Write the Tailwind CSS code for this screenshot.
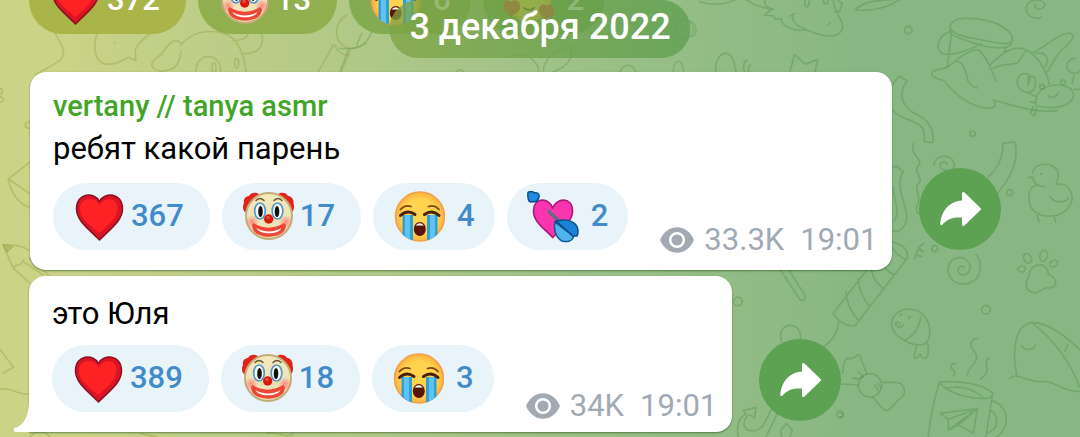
<!DOCTYPE html>
<html lang="ru">
<head>
  <meta charset="UTF-8" />
  <meta name="viewport" content="width=device-width, initial-scale=1.0" />
  <title>vertany // tanya asmr</title>
  <script src="https://cdn.jsdelivr.net/npm/@tailwindcss/browser@4"></script>
</head>
<body class="font-[Roboto,'Noto_Sans',sans-serif]">

  <!-- Shared emoji and icons -->
  <svg class="absolute size-0" aria-hidden="true">
    <defs>
      <linearGradient id="skin" x1="0" y1="0" x2="0" y2="1"><stop offset="0" stop-color="#f3e9bd" /><stop offset="1" stop-color="#ecdfb4" /></linearGradient>
      <radialGradient id="blush"><stop offset="0" stop-color="#f98a7e" /><stop offset="1" stop-color="#f98a7e" stop-opacity="0" /></radialGradient>
      <radialGradient id="yellow"><stop offset="0.7" stop-color="#ffd34e" /><stop offset="1" stop-color="#fbb040" /></radialGradient>
      <clipPath id="cryClip"><circle cx="27" cy="25.5" r="25" /></clipPath>
    </defs>
    <symbol id="heart" viewBox="0 0 52 52">
      <path d="M26.500 10.500C22 1 3.500 1 3.500 18C3.500 30 17 39 26.500 49C36 39 49.500 30 49.500 18C49.500 1 31 1 26.500 10.500Z" fill="#d81524" stroke="#8f0f20" stroke-width="1.500" stroke-linejoin="round" />
      <path d="M26.500 14C22 5.500 7 5.500 7 18C7 28 18 34.500 26 42C35 34.500 44.500 27 44.500 17C44.500 6 31 5.500 26.500 14Z" fill="#ff2224" />
    </symbol>
    <symbol id="clown" viewBox="0 0 52 52">
      <path d="M3 21C0 18 1 14 2 12C1 8 4 5 7 5C9 1 14 1 17 3L9 22ZM50 21C53 18 52 14 51.500 12C52 8 49 5 46 5C44 1 39 1 36 3L44 22Z" fill="#e2231a" />
      <circle cx="27" cy="25" r="23" fill="url(#skin)" stroke="#c2ad76" stroke-width="2" />
      <circle cx="10" cy="31" r="7" fill="url(#blush)" /><circle cx="44" cy="31" r="7" fill="url(#blush)" />
      <path d="M14 9.500Q18 5.500 22 9.500M32 9.500Q36 5.500 40 9.500" fill="none" stroke="#6b5a33" stroke-width="1.500" stroke-linecap="round" />
      <ellipse cx="18" cy="20" rx="5.300" ry="8" fill="#fff" stroke="#4f97c9" stroke-width="1.700" />
      <ellipse cx="35.500" cy="20" rx="5.300" ry="8" fill="#fff" stroke="#4f97c9" stroke-width="1.700" />
      <ellipse cx="18.500" cy="20.500" rx="2.300" ry="5.500" fill="#111" /><ellipse cx="35" cy="20.500" rx="2.300" ry="5.500" fill="#111" />
      <circle cx="26.700" cy="28" r="4.700" fill="#d8190e" /><circle cx="26" cy="26.500" r="1.800" fill="#f04a36" />
      <path d="M12.500 32.500C20 38 33 38 41 32.500C43.500 31.500 44.500 34 43.500 37C41 48.500 13 48.500 10.500 37C9.500 34 10.500 31.500 12.500 32.500Z" fill="#ee4537" />
      <path d="M14.500 37C21 41.500 33 41.500 39.500 37C37 44 17 44 14.500 37Z" fill="#fff" />
    </symbol>
    <symbol id="cry" viewBox="0 0 52 52">
      <circle cx="27" cy="25.500" r="24.500" fill="url(#yellow)" stroke="#f3a04a" stroke-width="1.500" />
      <g clip-path="url(#cryClip)">
        <path d="M9.500 24H20V52H9.500ZM34 24H44.500V52H34Z" fill="#2f9fd8" />
        <path d="M12 24H17V52H12ZM37 24H42V52H37Z" fill="#5cc3f2" />
      </g>
      <path d="M7.500 18.500Q12 13.500 18 15.500M46 18.500Q41.500 13.500 35.500 15.500" fill="none" stroke="#7a4a12" stroke-width="1.800" stroke-linecap="round" />
      <path d="M7.500 24.500Q14.500 18 22 23.500M46 24.500Q39 18 31.500 23.500" fill="none" stroke="#4a2206" stroke-width="3" stroke-linecap="round" />
      <ellipse cx="26.800" cy="38" rx="6" ry="7" fill="#5a1508" />
      <path d="M22.500 34.500Q26.800 30 31 34.500Z" fill="#fff" />
    </symbol>
    <symbol id="cupid" viewBox="0 0 52 52">
      <path d="M25.700 17C22 6 6.500 6 6.500 20C6.500 31 18 38 25.700 46.500C34 38 45.500 31 45.500 20C45.500 6 30 6 25.700 17Z" fill="#fb34b0" stroke="#b01878" stroke-width="1.700" stroke-linejoin="round" />
      <path d="M1 1.500C4 -0.500 6 0.500 7.500 2C10 1.500 12.500 2.500 12 6C11.500 8.500 10 9.500 9.500 10.500C6 11 3 11.500 2 10C1 8 0.700 4 1 1.500Z" fill="#1f8be0" stroke="#0b4f86" stroke-width="1.500" />
      <path d="M22 20.500L36 34" stroke="#5d6f80" stroke-width="3.500" stroke-linecap="round" />
      <path d="M28 31C26 38 29 47 35 50C40 51.500 45 50 46 47L47 44L30 29Z" fill="#52b4ee" stroke="#0b5d94" stroke-width="1.500" stroke-linejoin="round" />
      <path d="M28 31C34 27.500 45 28.500 49 34C51.500 37 51.500 42 50 45L46 45Z" fill="#1c84d8" stroke="#0b4f86" stroke-width="1.500" stroke-linejoin="round" />
      <path d="M29 30L46 45" stroke="#0b4f86" stroke-width="1.500" />
    </symbol>
    <symbol id="love" viewBox="0 0 52 52">
      <circle cx="26" cy="25" r="22" fill="url(#yellow)" />
      <path d="M14 21Q18 16 22 21M31 21Q35 16 39 21M21 33Q26 37 31 33" fill="none" stroke="#7a4a12" stroke-width="2" stroke-linecap="round" />
      <path d="M8 27C4 23 -1 27 1 33C2 37 6 39 8 41C13 39 18 36 17 30C16 25 10 24 8 27ZM44 31C40 27 35 31 36 36C37 40 41 43 43 45C48 43 52 40 51 35C51 30 46 28 44 31Z" fill="#f0402c" />
    </symbol>
    <symbol id="eye" viewBox="0 0 34 26">
      <path d="M0 13C7 -4 27 -4 34 13C27 30 7 30 0 13Z" fill="#a1aab3" />
      <circle cx="17" cy="13" r="6.800" fill="#a1aab3" stroke="#fff" stroke-width="2.500" />
    </symbol>
    <symbol id="share" viewBox="0 0 82 82">
      <path d="M43 25.500C43 24 44.500 23.500 45.500 24.500L61.500 40C62.200 40.700 62.200 41.300 61.500 42L45.500 57.500C44.500 58.500 43 58 43 56.500V49.500C35 49 29 50 23.500 56.500C22.500 57.500 21 57 21.300 55.500C22.500 44 29 33.500 43 32.500Z" fill="#fff" />
    </symbol>
  </svg>

  <main class="relative min-h-screen overflow-hidden bg-linear-to-r from-[#cbd387] from-5% via-[#9bc087] via-55% to-[#88b783] to-80%">

    <!-- Wallpaper doodles -->
    <svg class="absolute inset-0 w-full h-full" viewBox="0 0 1080 437" preserveAspectRatio="xMidYMid slice" fill="none" stroke-linecap="round" stroke-linejoin="round" aria-hidden="true">
      <g transform="scale(.33333)" stroke="#8d9c36" stroke-opacity=".35" stroke-width="5">
        <path d="M165 100C190 140 200 165 180 180C160 198 130 208 108 224M292 100C280 130 280 170 305 188C325 200 355 190 385 172L408 182L405 150C415 130 430 115 450 102M545 130C520 110 505 135 490 155C475 175 455 180 455 195C465 220 500 215 520 205C540 190 540 170 543 155M543 135C570 100 610 92 650 95C700 100 730 140 738 214M588 214C588 185 605 170 625 170C650 170 662 190 662 214M700 122C730 120 745 110 745 100M785 102C795 140 770 165 725 160M1040 45C1000 70 1000 120 1035 140C1050 150 1075 145 1100 130M1000 135L955 214M1050 150L1025 214M1005 135C1010 155 1035 168 1048 165" />
        <path d="M0 265C12 270 8 280 0 284M0 290C18 295 8 308 0 306M88 365C72 368 72 385 88 385M88 487L25 537L88 580M25 540C35 585 60 612 88 622M8 733L40 805L88 848M8 733C35 735 65 735 88 752M40 805C48 785 60 808 70 780M70 785L130 825M88 775L145 825M0 1048L40 1102L8 1120M0 1168C30 1160 55 1185 85 1182M90 1311C105 1292 135 1292 150 1311M420 1300L470 1311M800 1300C830 1290 860 1320 880 1300" />
        <path d="M10 735L38 740L22 756Z" fill="#8d9c36" fill-opacity=".35" />
        <ellipse cx="642" cy="205" rx="6" ry="16" /><ellipse cx="710" cy="190" rx="6" ry="14" /><circle cx="345" cy="128" r="1" />
      </g>
      <g transform="translate(340 0) scale(.33333)" stroke="#4c8e44" stroke-opacity=".3" stroke-width="5">
        <path d="M0 145C40 150 80 140 95 95M0 215L25 150M50 135L65 100M350 215C355 208 365 208 370 215M510 170C560 150 600 190 595 215M690 140C705 175 680 200 640 215M610 215C610 180 640 150 690 140M840 215C850 190 880 190 887 215M1000 215C1000 190 1010 180 1020 185C1030 190 1030 210 1030 215M1055 110C1075 105 1070 70 1050 62" />
        <circle cx="1032" cy="88" r="28" />
      </g>
      <g transform="translate(700 0) scale(.33333)" stroke="#4c8e44" stroke-opacity=".36" stroke-width="5">
        <path d="M0 5C30 15 70 15 105 0M140 0L165 15L215 28L193 45L222 48L225 58L243 55C245 75 270 95 320 90M195 0C190 15 205 25 220 28M270 48L285 40C268 50 285 75 300 80C340 100 380 115 410 105C430 95 432 75 420 55C410 35 400 20 400 0M385 75L390 68M413 0L427 10L418 35L405 35M315 0C310 30 330 25 328 0M370 0C370 12 385 20 385 0M465 30C500 -5 550 5 600 -5M465 30C520 35 570 20 605 -5" />
        <path d="M47 215C45 180 60 160 78 160C100 162 102 190 108 215M140 180C128 190 130 205 133 215M150 195C143 202 145 210 147 215M270 215L283 165C290 160 300 185 315 192C330 190 350 175 353 182L345 215" />
        <circle cx="625" cy="90" r="11" /><circle cx="818" cy="401" r="8" />
        <path d="M1035 15C1030 -5 985 -5 980 20C975 45 1000 60 1025 52M1005 12C1000 28 1025 35 1035 15" />
        <path d="M752 75C760 50 810 52 860 62C920 75 945 110 935 125C920 140 860 120 820 115C780 110 740 90 752 75ZM750 80V100C770 115 810 125 850 138C890 145 940 150 935 120M755 95L742 200M750 95C715 105 700 150 730 162C770 168 810 145 847 132" />
        <path d="M835 150C810 145 770 180 740 203C710 210 695 210 695 222C700 240 725 235 735 245C770 290 820 325 870 325C885 325 890 310 880 300C940 315 1000 340 1070 332M835 150C860 170 875 210 887 242M770 183C800 195 790 210 800 225C800 245 815 260 832 264M870 195C900 165 940 130 980 150C1010 165 1040 210 1048 252M880 205C900 190 940 195 950 190C965 180 965 160 980 152M918 145L912 155M998 158C1040 140 1080 95 1110 100C1130 105 1110 130 1090 145C1065 165 1055 200 1042 215M1010 160C1040 155 1050 180 1035 200" />
        <path d="M1008 312C1005 280 1030 255 1070 255C1110 255 1125 275 1120 290C1110 320 1060 330 1010 318ZM1046 288C1055 295 1070 292 1075 278M985 222C960 215 945 235 955 260C970 280 995 282 1003 265C1010 245 1005 225 992 228L985 255ZM1125 175C1105 175 1095 195 1105 212C1120 225 1140 220 1140 210M985 280L1010 290M990 305L1005 308M1000 320L992 340L1003 348L1010 325M1117 250L1122 225M1122 268H1140" />
        <circle cx="1026" cy="260" r="7" /><circle cx="1089" cy="247" r="7" />
        <path d="M578 255L597 228L622 243C595 275 600 310 640 338C680 355 705 385 698 428L672 425C678 390 665 375 640 365C610 355 590 345 578 330" />
        <path d="M908 430L945 426C955 470 940 515 915 550C890 590 860 610 830 625M908 430C912 470 890 510 865 530" />
      </g>
      <g transform="translate(840 150) scale(.33333)" stroke="#4c8e44" stroke-opacity=".36" stroke-width="5">
        <path d="M220 -20C210 10 238 20 240 40C215 65 245 75 240 95C215 120 245 135 235 155C225 180 230 190 240 192M282 45C285 10 340 10 343 45C340 70 300 65 300 45C305 30 320 35 322 45M157 55L168 47L190 65C160 110 205 170 200 205C195 240 170 250 160 242M160 110C160 150 185 190 160 215" />
        <path d="M225 325L228 315L245 320M228 318L232 300L250 305L235 292L252 280" />
        <circle cx="284" cy="296" r="9" /><circle cx="509" cy="128" r="9" /><circle cx="438" cy="479" r="13" />
        <path d="M408 312C430 340 425 390 385 400C345 410 320 380 325 350C335 315 380 315 390 345C395 375 360 385 355 365C352 350 365 345 372 352" />
        <path d="M578 70C580 35 650 30 655 75C655 85 652 95 648 103C690 95 705 140 690 165C670 205 600 210 575 175C560 150 565 110 590 105M578 82H564M580 82C578 95 590 110 615 110M630 140C645 160 670 160 685 145M592 195L597 216M642 197L647 217" /><circle cx="604" cy="72" r="1.500" />
        <ellipse cx="563" cy="325" rx="11" ry="15" transform="rotate(-30 563 325)" /><ellipse cx="611" cy="317" rx="11" ry="17" transform="rotate(15 611 317)" /><ellipse cx="641" cy="341" rx="13" ry="9" transform="rotate(-30 641 341)" /><ellipse cx="545" cy="357" rx="11" ry="9" />
        <path d="M568 375C570 335 625 335 625 372C650 385 655 405 635 413C610 410 610 420 590 428C560 430 550 410 568 375Z" />
        <path d="M155 275C195 285 205 305 202 325L45 527C15 530 -5 515 -20 490L80 360M150 280C165 310 185 325 200 328M130 345C140 360 150 370 163 375M95 362C100 390 115 405 130 415M55 385C55 420 75 455 90 470M18 425C20 460 35 490 55 510" />
        <path d="M155 520C155 490 190 470 225 480C260 490 275 530 268 560C262 590 235 590 200 575C170 560 155 545 155 520ZM243 502C235 535 225 555 192 572M168 515C165 530 180 540 190 525M172 518C178 515 182 520 180 524M180 495L186 492M205 505L211 500M230 585L222 622C230 628 235 620 240 612C245 625 255 630 262 620C268 600 265 590 262 580" />
        <path d="M8 670C10 640 15 625 25 625C45 630 50 610 58 615C65 630 72 650 80 672M38 683C60 690 60 685 68 680M5 702L55 705M130 697H170C195 700 200 730 185 742C165 755 160 775 140 782C120 775 115 755 98 742M55 665L70 680" /><circle cx="90" cy="706" r="35" /><path d="M105 705L115 722M115 702L122 712M0 787C12 790 12 802 0 802" />
        <path d="M412 566C395 565 385 585 400 600C430 635 380 650 382 675M346 640C330 640 330 655 342 662C348 670 342 675 340 678M448 625C430 625 445 655 440 665C435 680 425 680 422 688" />
        <path d="M265 861C270 800 285 740 298 697C350 690 430 700 458 730C460 755 400 745 360 735C335 725 310 715 298 697M318 716C350 705 400 715 428 742M456 740L438 861M456 752C505 765 515 830 470 861M450 780C480 795 475 835 446 848M300 790L412 776L400 850L355 825L325 840V808ZM325 808L412 776L325 840M355 825L412 776" />
        <path d="M530 675C515 600 525 525 575 518C620 515 680 560 720 600M578 520C640 565 700 650 718 712M545 586C550 600 580 605 585 586M684 583L675 603M508 685C530 665 560 695 600 695C650 690 660 725 720 725" />
      </g>
      <g transform="translate(720 262) scale(.33333)" stroke="#4c8e44" stroke-opacity=".36" stroke-width="5">
        <path d="M180 22L238 110C245 122 260 112 255 100L207 25M185 240C175 210 190 190 212 190C240 192 245 220 240 240M355 178C355 210 340 235 310 255M155 440L130 490C110 515 80 510 72 490C70 470 85 455 92 460L103 468L108 437L70 445L78 455C50 470 50 500 55 525M172 455L138 525M185 525L182 505L200 485L217 505L210 525" />
        <circle cx="54" cy="118" r="13" /><circle cx="360" cy="457" r="10" />
      </g>
    </svg>

    <div class="relative flex flex-col pb-[5px]">

      <!-- Tail of the previous message -->
      <div class="-mt-[33px] ml-[29px] flex gap-3 text-white">
        <button class="flex h-[67px] items-center gap-[6px] rounded-full bg-[#a9b449] pl-5 pr-[26px] text-[31px] font-medium"><svg class="size-[52px]"><use href="#heart" /></svg>372</button>
        <button class="flex h-[67px] items-center gap-[6px] rounded-full bg-[#92af4f] pl-5 pr-[26px] text-[31px] font-medium"><svg class="size-[52px]"><use href="#clown" /></svg>13</button>
        <button class="flex h-[67px] items-center gap-3 rounded-full bg-[#83ab50] pl-5 pr-5 text-[31px] font-medium"><svg class="size-[52px]"><use href="#cry" /></svg>6</button>
        <button class="flex h-[67px] items-center gap-3 rounded-full bg-[#75a752] pl-5 pr-5 text-[31px] font-medium"><svg class="size-[52px]"><use href="#love" /></svg>2</button>
      </div>

      <!-- First message -->
      <div class="mt-[38px] ml-[30px] flex items-end gap-[27px]">
        <article class="rounded-2xl bg-white pt-[13px] pr-[15px] pb-5 pl-[23px] shadow-[0_1px_2px_rgba(40,80,30,0.6)]">
          <h2 class="text-[29px] leading-[42px] font-medium text-[#42a527]">vertany // tanya asmr</h2>
          <p class="text-[31px] leading-[44px] text-black">ребят какой парень</p>
          <div class="mt-3 flex items-end">
            <div class="flex gap-3 text-[#428bca]">
              <button class="flex h-[67px] items-center gap-[6px] rounded-full bg-[#e8f3fa] pl-5 pr-[26px] text-[31px] font-medium"><svg class="size-[52px]"><use href="#heart" /></svg>367</button>
              <button class="flex h-[67px] items-center gap-[6px] rounded-full bg-[#e8f3fa] pl-5 pr-[26px] text-[31px] font-medium"><svg class="size-[52px]"><use href="#clown" /></svg>17</button>
              <button class="flex h-[67px] items-center gap-3 rounded-full bg-[#e8f3fa] pl-5 pr-5 text-[31px] font-medium"><svg class="size-[52px]"><use href="#cry" /></svg>4</button>
              <button class="flex h-[67px] items-center gap-3 rounded-full bg-[#e8f3fa] pl-5 pr-5 text-[31px] font-medium"><svg class="size-[52px]"><use href="#cupid" /></svg>2</button>
            </div>
            <div class="-mb-2 ml-8 flex items-center text-[31px] leading-9 text-[#a1aab3]">
              <svg class="mr-[10px] h-[26px] w-[34px]"><use href="#eye" /></svg>
              <span>33.3K</span>
              <time class="ml-4">19:01</time>
            </div>
          </div>
        </article>
        <button class="mb-5 size-[82px] rounded-full bg-[#5da153]" aria-label="Поделиться"><svg class="size-full"><use href="#share" /></svg></button>
      </div>

      <!-- Second message -->
      <div class="mt-[6px] ml-[29px] flex items-end gap-[27px]">
        <article class="relative rounded-2xl rounded-bl-none bg-white pt-[17px] pr-[15px] pb-5 pl-[23px] shadow-[0_1px_2px_rgba(40,80,30,0.6)]">
          <svg class="absolute bottom-0 -left-[15px] h-[32px] w-[16px]" viewBox="0 0 16 32" aria-hidden="true"><path d="M15 0C15 16 10 26 0 28C-1 30 0 32 2 32H16V0Z" fill="#fff" /></svg>
          <p class="text-[31px] leading-[42px] text-black">это Юля</p>
          <div class="mt-[10px] flex items-end">
            <div class="flex gap-3 text-[#428bca]">
              <button class="flex h-[67px] items-center gap-[6px] rounded-full bg-[#e8f3fa] pl-5 pr-[26px] text-[31px] font-medium"><svg class="size-[52px]"><use href="#heart" /></svg>389</button>
              <button class="flex h-[67px] items-center gap-[6px] rounded-full bg-[#e8f3fa] pl-5 pr-[26px] text-[31px] font-medium"><svg class="size-[52px]"><use href="#clown" /></svg>18</button>
              <button class="flex h-[67px] items-center gap-3 rounded-full bg-[#e8f3fa] pl-5 pr-5 text-[31px] font-medium"><svg class="size-[52px]"><use href="#cry" /></svg>3</button>
            </div>
            <div class="-mb-3 ml-8 flex items-center text-[31px] leading-9 text-[#a1aab3]">
              <svg class="mr-[10px] h-[26px] w-[34px]"><use href="#eye" /></svg>
              <span>34K</span>
              <time class="ml-4">19:01</time>
            </div>
          </div>
        </article>
        <button class="mb-[11px] size-[82px] rounded-full bg-[#5da153]" aria-label="Поделиться"><svg class="size-full"><use href="#share" /></svg></button>
      </div>
    </div>

    <!-- Floating date -->
    <div class="absolute top-0 left-1/2 -translate-x-1/2 rounded-full bg-linear-to-r from-[#7da343]/75 to-[#5c9e4f]/75 px-5 pb-1 text-[36px] leading-[54px] font-medium whitespace-nowrap text-white">3 декабря 2022</div>
  </main>
</body>
</html>
